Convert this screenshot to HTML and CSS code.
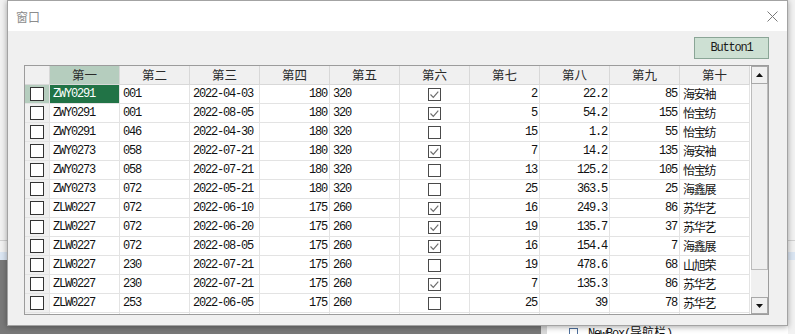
FILE: index.html
```html
<!DOCTYPE html>
<html lang="zh-CN">

<head>
    <meta charset="UTF-8">
    <meta name="viewport" content="width=device-width, initial-scale=1.0">
    <title>窗口</title>
    <link rel="stylesheet" href="styles.css">
</head>

<body>
    <!-- Things on the desktop behind the dialog -->
    <div class="bg-line"></div>
    <div class="bg-select"></div>
    <div class="bg-dark"></div>
    <div class="bg-props">
        <span class="bg-check"></span>
        <span class="bg-label">NewBox(<span class="zh">导航栏</span>)</span>
    </div>

    <!-- The dialog -->
    <div class="window">
        <div class="titlebar">
            <span class="title">窗口</span>
            <svg class="close" width="11" height="11" viewBox="0 0 11 11">
                <path d="M0.5 0.5L10.5 10.5M10.5 0.5L0.5 10.5" />
            </svg>
        </div>

        <div class="client">
            <div class="toolbar">
                <button class="btn">Button1</button>
            </div>

            <div class="grid">
                <div class="grid-body">
                    <div class="row head">
                        <div class="cell"></div>
                        <div class="cell sel">第一</div>
                        <div class="cell">第二</div>
                        <div class="cell">第三</div>
                        <div class="cell">第四</div>
                        <div class="cell">第五</div>
                        <div class="cell">第六</div>
                        <div class="cell">第七</div>
                        <div class="cell">第八</div>
                        <div class="cell">第九</div>
                        <div class="cell">第十</div>
                    </div>

                    <div class="row">
                        <div class="cell rh sel"><span class="box"></span></div>
                        <div class="cell cur">ZWY0291</div>
                        <div class="cell">001</div>
                        <div class="cell">2022-04-03</div>
                        <div class="cell r">180</div>
                        <div class="cell">320</div>
                        <div class="cell ck"><span class="box"><svg viewBox="0 0 11 11"><path d="M1.5 5.5l2.8 2.8 5-5.6" /></svg></span></div>
                        <div class="cell r">2</div>
                        <div class="cell r">22.2</div>
                        <div class="cell r">85</div>
                        <div class="cell zh">海安袖</div>
                    </div>
                    <div class="row">
                        <div class="cell rh"><span class="box"></span></div>
                        <div class="cell">ZWY0291</div>
                        <div class="cell">001</div>
                        <div class="cell">2022-08-05</div>
                        <div class="cell r">180</div>
                        <div class="cell">320</div>
                        <div class="cell ck"><span class="box"><svg viewBox="0 0 11 11"><path d="M1.5 5.5l2.8 2.8 5-5.6" /></svg></span></div>
                        <div class="cell r">5</div>
                        <div class="cell r">54.2</div>
                        <div class="cell r">155</div>
                        <div class="cell zh">怡宝纺</div>
                    </div>
                    <div class="row">
                        <div class="cell rh"><span class="box"></span></div>
                        <div class="cell">ZWY0291</div>
                        <div class="cell">046</div>
                        <div class="cell">2022-04-30</div>
                        <div class="cell r">180</div>
                        <div class="cell">320</div>
                        <div class="cell ck"><span class="box"></span></div>
                        <div class="cell r">15</div>
                        <div class="cell r">1.2</div>
                        <div class="cell r">55</div>
                        <div class="cell zh">怡宝纺</div>
                    </div>
                    <div class="row">
                        <div class="cell rh"><span class="box"></span></div>
                        <div class="cell">ZWY0273</div>
                        <div class="cell">058</div>
                        <div class="cell">2022-07-21</div>
                        <div class="cell r">180</div>
                        <div class="cell">320</div>
                        <div class="cell ck"><span class="box"><svg viewBox="0 0 11 11"><path d="M1.5 5.5l2.8 2.8 5-5.6" /></svg></span></div>
                        <div class="cell r">7</div>
                        <div class="cell r">14.2</div>
                        <div class="cell r">135</div>
                        <div class="cell zh">海安袖</div>
                    </div>
                    <div class="row">
                        <div class="cell rh"><span class="box"></span></div>
                        <div class="cell">ZWY0273</div>
                        <div class="cell">058</div>
                        <div class="cell">2022-07-21</div>
                        <div class="cell r">180</div>
                        <div class="cell">320</div>
                        <div class="cell ck"><span class="box"></span></div>
                        <div class="cell r">13</div>
                        <div class="cell r">125.2</div>
                        <div class="cell r">105</div>
                        <div class="cell zh">怡宝纺</div>
                    </div>
                    <div class="row">
                        <div class="cell rh"><span class="box"></span></div>
                        <div class="cell">ZWY0273</div>
                        <div class="cell">072</div>
                        <div class="cell">2022-05-21</div>
                        <div class="cell r">180</div>
                        <div class="cell">320</div>
                        <div class="cell ck"><span class="box"></span></div>
                        <div class="cell r">25</div>
                        <div class="cell r">363.5</div>
                        <div class="cell r">25</div>
                        <div class="cell zh">海鑫展</div>
                    </div>
                    <div class="row">
                        <div class="cell rh"><span class="box"></span></div>
                        <div class="cell">ZLW0227</div>
                        <div class="cell">072</div>
                        <div class="cell">2022-06-10</div>
                        <div class="cell r">175</div>
                        <div class="cell">260</div>
                        <div class="cell ck"><span class="box"><svg viewBox="0 0 11 11"><path d="M1.5 5.5l2.8 2.8 5-5.6" /></svg></span></div>
                        <div class="cell r">16</div>
                        <div class="cell r">249.3</div>
                        <div class="cell r">86</div>
                        <div class="cell zh">苏华艺</div>
                    </div>
                    <div class="row">
                        <div class="cell rh"><span class="box"></span></div>
                        <div class="cell">ZLW0227</div>
                        <div class="cell">072</div>
                        <div class="cell">2022-06-20</div>
                        <div class="cell r">175</div>
                        <div class="cell">260</div>
                        <div class="cell ck"><span class="box"><svg viewBox="0 0 11 11"><path d="M1.5 5.5l2.8 2.8 5-5.6" /></svg></span></div>
                        <div class="cell r">19</div>
                        <div class="cell r">135.7</div>
                        <div class="cell r">37</div>
                        <div class="cell zh">苏华艺</div>
                    </div>
                    <div class="row">
                        <div class="cell rh"><span class="box"></span></div>
                        <div class="cell">ZLW0227</div>
                        <div class="cell">072</div>
                        <div class="cell">2022-08-05</div>
                        <div class="cell r">175</div>
                        <div class="cell">260</div>
                        <div class="cell ck"><span class="box"><svg viewBox="0 0 11 11"><path d="M1.5 5.5l2.8 2.8 5-5.6" /></svg></span></div>
                        <div class="cell r">16</div>
                        <div class="cell r">154.4</div>
                        <div class="cell r">7</div>
                        <div class="cell zh">海鑫展</div>
                    </div>
                    <div class="row">
                        <div class="cell rh"><span class="box"></span></div>
                        <div class="cell">ZLW0227</div>
                        <div class="cell">230</div>
                        <div class="cell">2022-07-21</div>
                        <div class="cell r">175</div>
                        <div class="cell">260</div>
                        <div class="cell ck"><span class="box"></span></div>
                        <div class="cell r">19</div>
                        <div class="cell r">478.6</div>
                        <div class="cell r">68</div>
                        <div class="cell zh">山旭荣</div>
                    </div>
                    <div class="row">
                        <div class="cell rh"><span class="box"></span></div>
                        <div class="cell">ZLW0227</div>
                        <div class="cell">230</div>
                        <div class="cell">2022-07-21</div>
                        <div class="cell r">175</div>
                        <div class="cell">260</div>
                        <div class="cell ck"><span class="box"><svg viewBox="0 0 11 11"><path d="M1.5 5.5l2.8 2.8 5-5.6" /></svg></span></div>
                        <div class="cell r">7</div>
                        <div class="cell r">135.3</div>
                        <div class="cell r">86</div>
                        <div class="cell zh">苏华艺</div>
                    </div>
                    <div class="row">
                        <div class="cell rh"><span class="box"></span></div>
                        <div class="cell">ZLW0227</div>
                        <div class="cell">253</div>
                        <div class="cell">2022-06-05</div>
                        <div class="cell r">175</div>
                        <div class="cell">260</div>
                        <div class="cell ck"><span class="box"></span></div>
                        <div class="cell r">25</div>
                        <div class="cell r">39</div>
                        <div class="cell r">78</div>
                        <div class="cell zh">苏华艺</div>
                    </div>
                    <!-- next row, mostly scrolled out of view -->
                    <div class="row">
                        <div class="cell rh"></div>
                        <div class="cell"></div>
                        <div class="cell"></div>
                        <div class="cell"></div>
                        <div class="cell"></div>
                        <div class="cell"></div>
                        <div class="cell"></div>
                        <div class="cell"></div>
                        <div class="cell"></div>
                        <div class="cell"></div>
                        <div class="cell"></div>
                    </div>
                </div>

                <div class="vscroll">
                    <div class="sb-btn">
                        <svg width="7" height="4" viewBox="0 0 7 4"><path d="M0 4H7L3.5 0Z" /></svg>
                    </div>
                    <div class="sb-thumb"></div>
                    <div class="sb-track"></div>
                    <div class="sb-btn down">
                        <svg width="7" height="4" viewBox="0 0 7 4"><path d="M0 0H7L3.5 4Z" /></svg>
                    </div>
                </div>
            </div>
        </div>
    </div>
</body>

</html>
```

FILE: styles.css
```css
/* Reset */
* {
    margin: 0;
    padding: 0;
    box-sizing: border-box;
}

/* Desktop canvas */
body {
    position: relative;
    width: 795px;
    height: 334px;
    overflow: hidden;
    background-color: #f2f2f2;
    font-family: "Liberation Mono", monospace;
    color: #111;
}

.zh {
    font-family: "Noto Sans CJK SC", sans-serif;
    letter-spacing: 0;
}

/* Bits of the app behind the dialog */
.bg-line {
    position: absolute;
    left: 0;
    top: 240px;
    width: 100%;
    height: 1px;
    background-color: #d0d0d0;
}

.bg-select {
    position: absolute;
    left: 0;
    top: 252px;
    width: 100%;
    height: 8px;
    background-color: #dbe6f3;
}

.bg-dark {
    position: absolute;
    left: 0;
    top: 260px;
    width: 541px;
    bottom: 0;
    background-color: #797979;
}

.bg-props {
    position: absolute;
    left: 541px;
    top: 260px;
    width: 247px;
    bottom: 0;
    background-color: #fff;
    border-left: 6px solid #d9d9d9;
}

.bg-check {
    position: absolute;
    left: 22px;
    top: 68px;
    width: 9px;
    height: 9px;
    border: 1px solid #4d6f9c;
}

.bg-label {
    position: absolute;
    left: 41px;
    top: 64px;
    font-size: 12px;
    line-height: 16px;
    letter-spacing: -1.2px;
    white-space: nowrap;
}

/* Dialog window */
.window {
    position: absolute;
    left: 7px;
    top: 0;
    width: 781px;
    height: 326px;
    display: flex;
    flex-direction: column;
    background-color: #f0f0f0;
    border: 1px solid #a3a3a3;
    box-shadow: 0 1px 6px rgba(0, 0, 0, 0.35);
}

.titlebar {
    height: 30px;
    flex-shrink: 0;
    display: flex;
    align-items: center;
    justify-content: space-between;
    padding: 0 9px 0 8px;
    background-color: #fff;
}

.title {
    font-family: "Noto Sans CJK SC", sans-serif;
    font-size: 12px;
    color: #8c8c8c;
}

.close path {
    stroke: #7a7a7a;
    stroke-width: 1;
    fill: none;
}

.client {
    flex: 1;
    padding: 6px 0 0 16px;
}

.toolbar {
    width: 745px;
    display: flex;
    justify-content: flex-end;
    margin-bottom: 6px;
}

.btn {
    width: 75px;
    height: 22px;
    background-color: #cde0d3;
    border: 1px solid #8aa596;
    font-family: "Liberation Mono", monospace;
    font-size: 12px;
    letter-spacing: -1.2px;
    color: #1a1a1a;
}

/* Data grid */
.grid {
    width: 745px;
    height: 250px;
    display: flex;
    border: 1px solid #9c9c9c;
    background-color: #fff;
}

.grid-body {
    width: 726px;
    overflow: hidden;
}

.row {
    display: grid;
    grid-template-columns: 25px repeat(10, 70px);
    height: 19px;
}

.cell {
    border-right: 1px solid #e3e3e3;
    border-bottom: 1px solid #e3e3e3;
    padding: 0 3px;
    font-size: 12px;
    line-height: 18px;
    letter-spacing: -1.2px;
    white-space: nowrap;
    overflow: hidden;
}

.cell.r {
    text-align: right;
    padding-right: 2px;
}

.cell.ck,
.cell.rh {
    display: flex;
    align-items: center;
    justify-content: center;
    padding: 0;
}

.cell.rh {
    background-color: #f0f0f0;
}

.cell.rh.sel {
    background-color: #b5cdbe;
}

.cell.cur {
    background-color: #217346;
    color: #fff;
}

.head .cell {
    background-color: #f0f0f0;
    border-right-color: #d8d8d8;
    border-bottom-color: #d8d8d8;
    text-align: center;
    font-family: "Noto Sans CJK SC", sans-serif;
    font-size: 12.5px;
    letter-spacing: 0;
    color: #2a2a2a;
}

.head .cell.sel {
    background-color: #b5cdbe;
}

/* Checkboxes */
.box {
    width: 13px;
    height: 13px;
    display: flex;
    align-items: center;
    justify-content: center;
    background-color: #fff;
    border: 1px solid #333;
}

.rh .box {
    border-width: 1.5px;
    width: 14px;
    height: 14px;
}

.ck .box {
    border-color: #4a4a4a;
}

.box svg {
    width: 11px;
    height: 11px;
}

.box path {
    fill: none;
    stroke: #6e6e6e;
    stroke-width: 1.2;
}

/* Vertical scrollbar */
.vscroll {
    width: 17px;
    display: flex;
    flex-direction: column;
    background-color: #f0f0f0;
}

.sb-btn {
    height: 18px;
    flex-shrink: 0;
    display: flex;
    align-items: center;
    justify-content: center;
    border: 1px solid #a8a8a8;
    background-color: #f0f0f0;
}

.sb-btn.down {
    height: 17px;
}

.sb-btn path {
    fill: #111;
}

.sb-thumb {
    height: 186px;
    flex-shrink: 0;
    border: 1px solid #bcbcbc;
    border-top: none;
    background-color: #efefef;
}

.sb-track {
    flex: 1;
}
```
